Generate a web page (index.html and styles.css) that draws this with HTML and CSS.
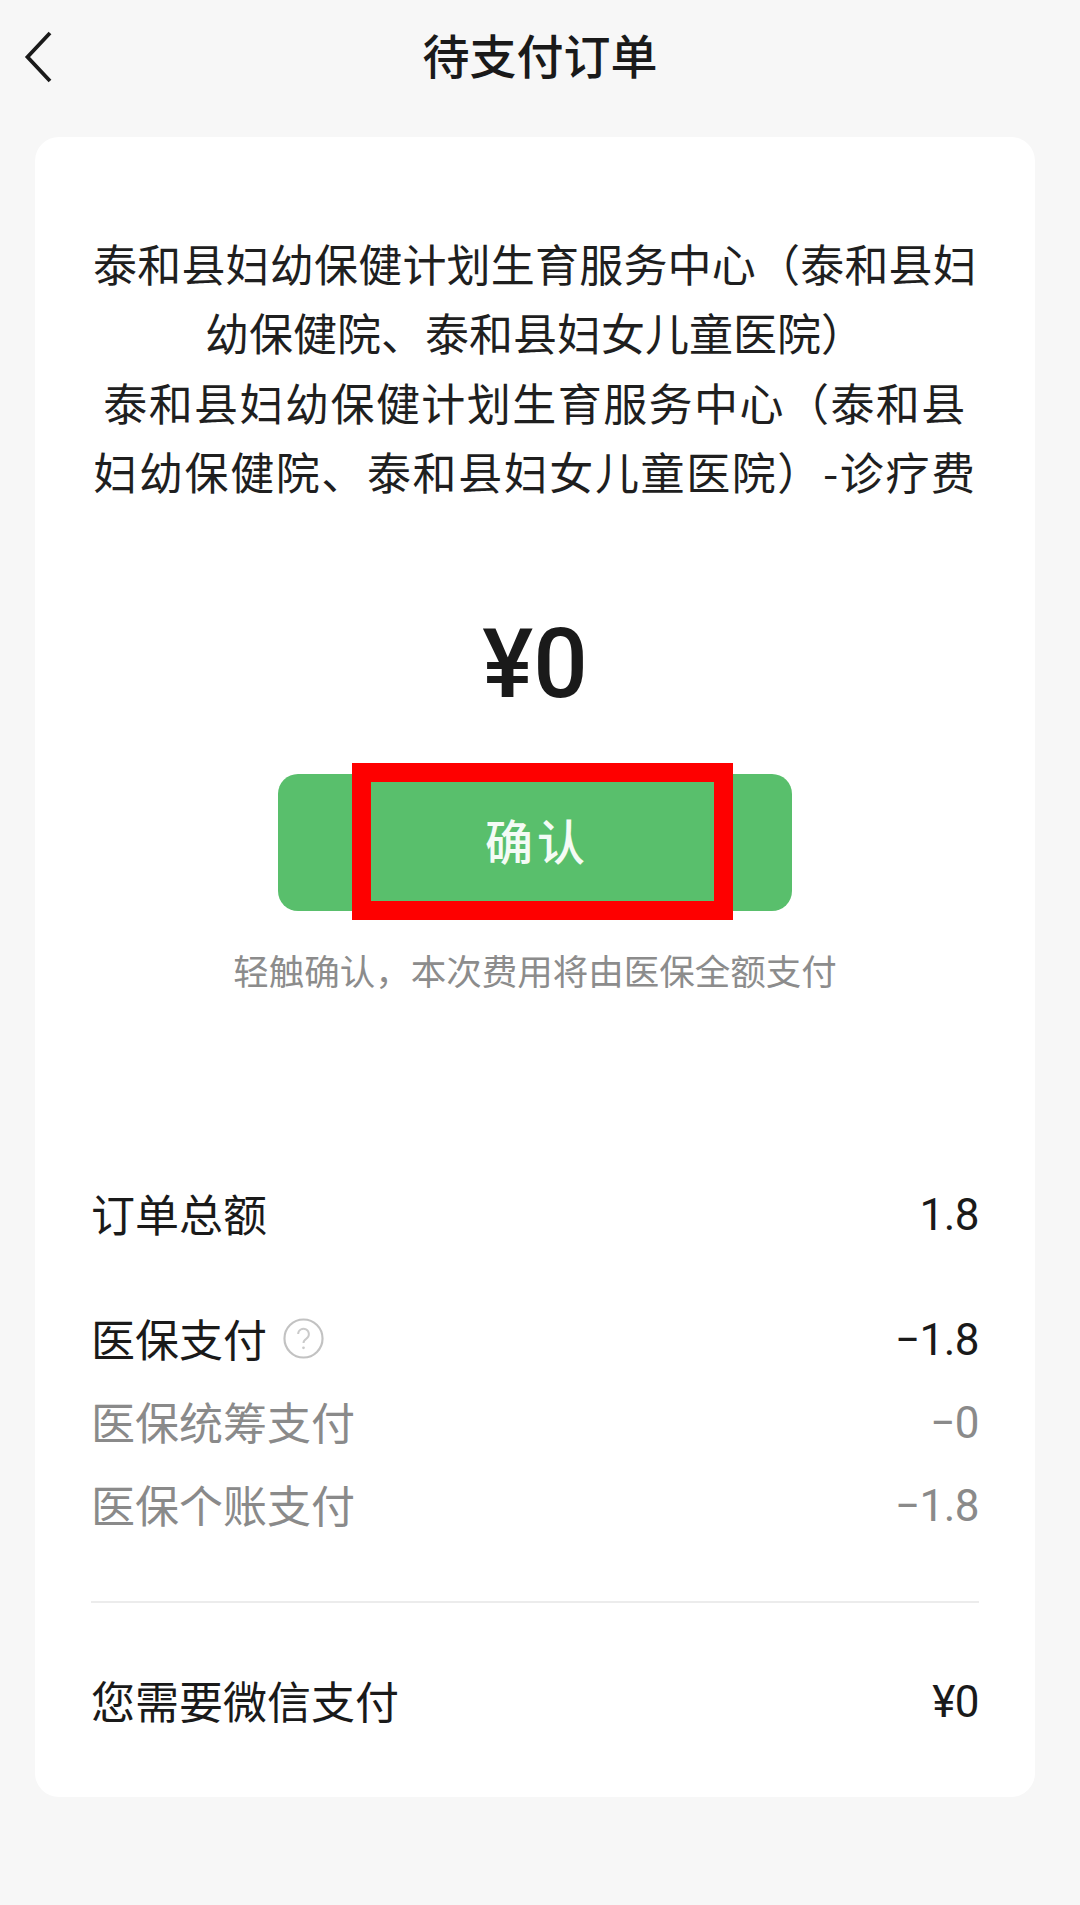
FILE: index.html
```html
<!DOCTYPE html>
<html lang="zh-CN">
<head>
<meta charset="utf-8">
<title>待支付订单</title>
<link rel="stylesheet" href="styles.css">
</head>
<body>
<header class="nav">
  <svg class="back" width="28" height="52" viewBox="0 0 28 52" aria-hidden="true"><path d="M26 2 L3.500 26 L26 50" fill="none" stroke="#1a1a1a" stroke-width="3.8"/></svg>
  <h1 class="title">待支付订单</h1>
</header>
<main class="card">
  <div class="desc">
    <div class="line line-a">泰和县妇幼保健计划生育服务中心（泰和县妇</div>
    <div class="line">幼保健院、泰和县妇女儿童医院）</div>
    <div class="line line-b">泰和县妇幼保健计划生育服务中心（泰和县</div>
    <div class="line line-c">妇幼保健院、泰和县妇女儿童医院）-诊疗费</div>
  </div>
  <div class="amount">¥0</div>
  <div class="btn">确认<span class="mark"></span></div>
  <div class="hint">轻触确认，本次费用将由医保全额支付</div>
  <div class="rows">
    <div class="row row-total"><span>订单总额</span><span class="num">1.8</span></div>
    <div class="row row-ins">
      <span class="label">医保支付
        <svg class="help" width="41" height="41" viewBox="0 0 42 42" aria-hidden="true"><circle cx="21" cy="21" r="19.500" fill="none" stroke="#c2c2c2" stroke-width="2.200"/><path d="M15.500 16.500a5.500 5.500 0 1 1 8.500 4.600c-2 1.300-3 2.400-3 4.600" fill="none" stroke="#cacaca" stroke-width="2"/><circle cx="21" cy="30.500" r="1.400" fill="#cacaca"/></svg>
      </span>
      <span class="num">−1.8</span>
    </div>
    <div class="row row-sub"><span>医保统筹支付</span><span class="num">−0</span></div>
    <div class="row row-sub"><span>医保个账支付</span><span class="num">−1.8</span></div>
  </div>
  <div class="row row-final"><span>您需要微信支付</span><span class="num">¥0</span></div>
</main>
</body>
</html>
```
FILE: styles.css
```css
* { box-sizing: border-box; }
html, body { margin: 0; padding: 0; }
body {
  width: 1080px;
  height: 1905px;
  background: #f7f7f7;
  color: #1a1a1a;
  font-family: "Noto Sans CJK SC", "Noto Sans", sans-serif;
  overflow: hidden;
}
.nav {
  position: relative;
  height: 112px;
  padding-bottom: 4px;
  display: flex;
  align-items: center;
  justify-content: center;
}
.back { position: absolute; left: 24px; top: 31px; }
.title { margin: 0; font-size: 47px; font-weight: 500; line-height: 60px; }
.card {
  width: 1000px;
  margin: 25px 0 0 35px;
  padding: 92px 56px 67px;
  background: #fff;
  border-radius: 24px;
}
.desc { font-size: 44px; line-height: 69.3px; text-align: center; color: #1f1f1f; }
.line { white-space: nowrap; }
.line-a { letter-spacing: 0.2px; }
.line-b { letter-spacing: 1.45px; }
.line-c { letter-spacing: 1.6px; }
.amount {
  margin-top: 110px;
  font-family: Roboto, sans-serif;
  font-size: 96px;
  font-weight: 500;
  line-height: 96px;
  text-align: center;
  color: #1a1a1a;
}
.btn {
  position: relative;
  width: 514px;
  height: 137px;
  margin: 62px auto 0;
  background: #59bf6c;
  border-radius: 20px;
  color: #f4fbf5;
  font-size: 48px;
  font-weight: 500;
  letter-spacing: 4px;
  text-indent: 4px;
  line-height: 130px;
  text-align: center;
}
.mark {
  position: absolute;
  left: 74px;
  top: -11px;
  width: 381px;
  height: 157px;
  border: 19px solid #fe0000;
}
.hint { margin-top: 34px; font-size: 35.5px; line-height: 50px; text-align: center; color: #8c8c8c; }
.rows { margin-top: 188px; padding-bottom: 67px; border-bottom: 2px solid #ececec; }
.row { display: flex; justify-content: space-between; align-items: center; font-size: 44px; line-height: 60px; }
.row-ins { margin-top: 65px; }
.row-sub { margin-top: 23px; color: #8a8a8a; }
.row-final { margin-top: 67px; }
.label { display: flex; align-items: center; gap: 16px; }
.num { font-family: Roboto, sans-serif; font-size: 44px; line-height: 50px; letter-spacing: -0.5px; margin-top: 4px; }
```
